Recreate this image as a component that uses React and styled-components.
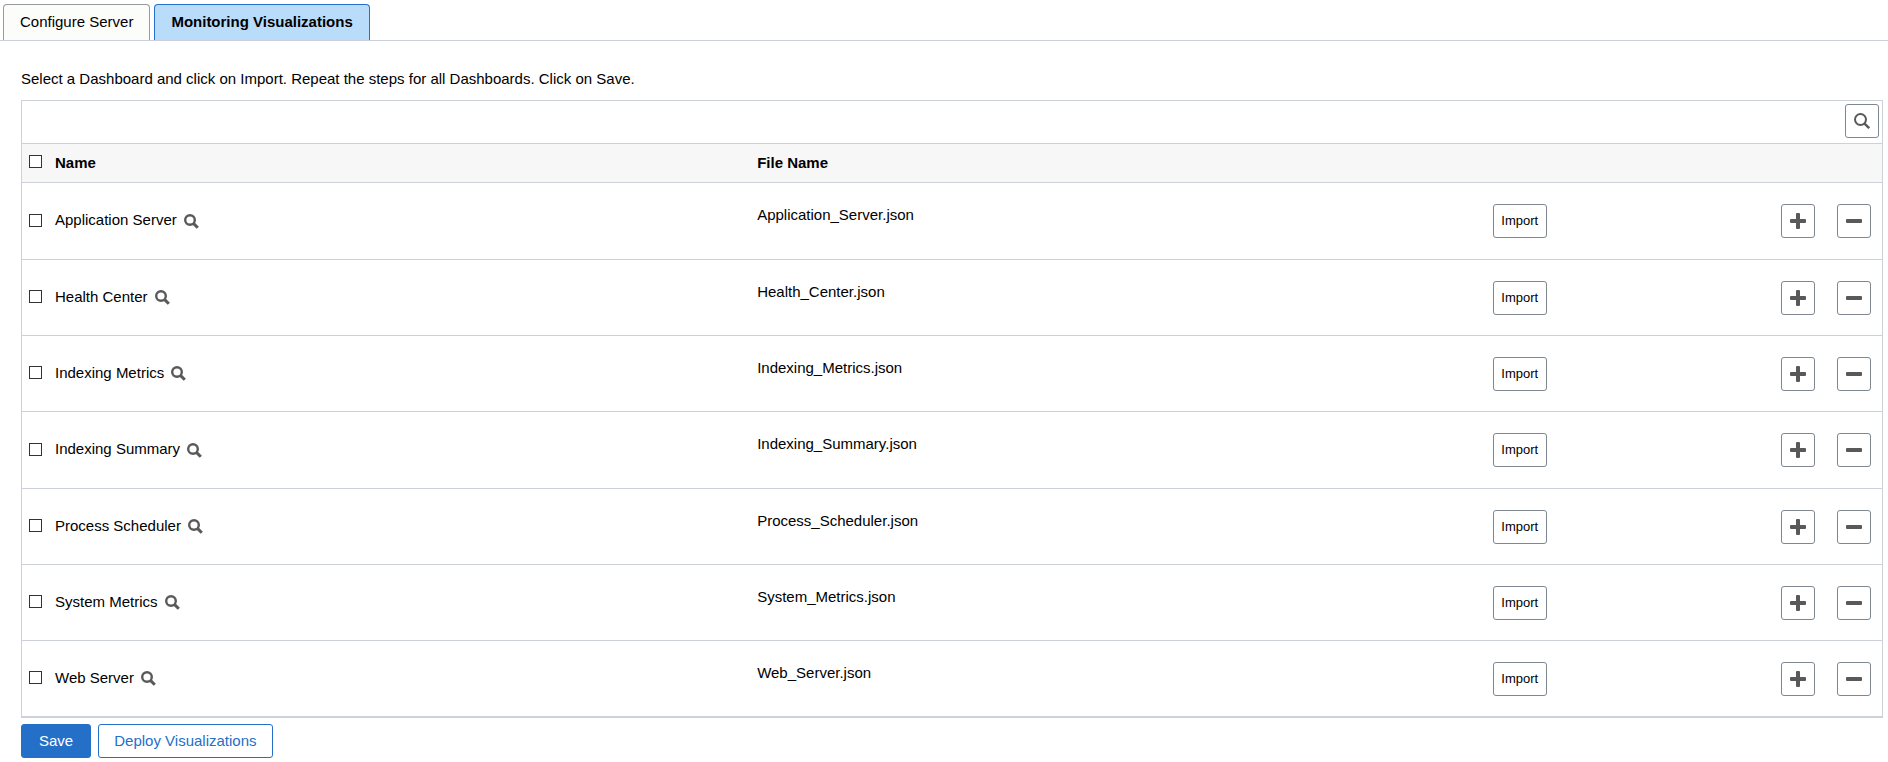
import React, { useState } from 'react';
import styled, { createGlobalStyle } from 'styled-components';

const colors = {
  line: '#cdd1d9',
  control: '#7f8790',
  icon: '#595959',
  primary: '#246fc8',
  tabFill: '#b9dcfb',
  header: '#f7f7f7',
};

const dashboards = [
  { name: 'Application Server', file: 'Application_Server.json' },
  { name: 'Health Center', file: 'Health_Center.json' },
  { name: 'Indexing Metrics', file: 'Indexing_Metrics.json' },
  { name: 'Indexing Summary', file: 'Indexing_Summary.json' },
  { name: 'Process Scheduler', file: 'Process_Scheduler.json' },
  { name: 'System Metrics', file: 'System_Metrics.json' },
  { name: 'Web Server', file: 'Web_Server.json' },
];

const GlobalStyle = createGlobalStyle`
  *, *::before, *::after {
    box-sizing: border-box;
  }

  body {
    margin: 0;
    background: #fff;
    color: #000;
    font-family: "Liberation Sans", Arial, sans-serif;
    font-size: 15px;
    line-height: 18px;
  }

  button, input {
    margin: 0;
    font: inherit;
  }
`;

const TabBar = styled.nav`
  display: flex;
  gap: 4px;
  padding: 4px 3px 0;
  border-bottom: 1px solid ${colors.line};
`;

const Tab = styled.button`
  height: 36px;
  padding: 0 16px 2px;
  border: 1px solid ${(props) => (props.$active ? colors.primary : '#969b9b')};
  border-bottom: 0;
  border-radius: 4px 4px 0 0;
  background: ${(props) => (props.$active ? colors.tabFill : '#fcfcfa')};
  color: #000;
  font-weight: ${(props) => (props.$active ? 'bold' : 'normal')};
  white-space: nowrap;
  cursor: pointer;
`;

const Content = styled.main`
  padding: 29px 5px 4px 21px;
`;

const Instructions = styled.p`
  margin: 0 0 12px;
`;

const Grid = styled.section`
  border: 1px solid ${colors.line};
  border-bottom-width: 2px;
`;

const GridToolbar = styled.div`
  display: flex;
  justify-content: flex-end;
  padding: 3px 3px 5px;
`;

const Table = styled.table`
  width: 100%;
  border-collapse: separate;
  border-spacing: 0;
  table-layout: fixed;
`;

const Col = styled.col`
  width: ${(props) => props.$width};
`;

const HeaderCell = styled.th`
  height: 40px;
  padding: 0 0 ${(props) => props.$lift || 0}px;
  border-top: 1px solid ${colors.line};
  border-bottom: 1px solid ${colors.line};
  background: ${colors.header};
  text-align: left;
`;

const Cell = styled.td`
  padding: 0 0 ${(props) => props.$lift || 0}px;
  border-bottom: 1px solid ${colors.line};
`;

const Row = styled.tr`
  height: 76px;

  &:nth-child(3n + 1) {
    height: 77px;
  }

  &:last-child {
    height: 75px;
  }

  &:last-child ${Cell} {
    border-bottom: 0;
  }
`;

const Checkbox = styled.input`
  display: block;
  width: 13px;
  height: 13px;
  margin-left: 7px;
  border: 1px solid #333;
  background: #fff;
  appearance: none;

  &:checked {
    background: ${colors.primary};
    box-shadow: inset 0 0 0 2px #fff;
  }
`;

const NameGroup = styled.div`
  display: flex;
  align-items: center;
  gap: 7px;
`;

const LookupButton = styled.button`
  display: flex;
  padding: 2px 0 0;
  border: 0;
  background: none;
  color: ${colors.icon};
  cursor: pointer;
`;

const IconButton = styled.button`
  display: flex;
  align-items: center;
  justify-content: center;
  width: 34px;
  height: 34px;
  padding: 0;
  border: 1px solid ${colors.control};
  border-radius: 3px;
  background: #fff;
  color: ${colors.icon};
  cursor: pointer;
`;

const ImportButton = styled.button`
  display: block;
  width: 54px;
  height: 34px;
  padding: 0;
  border: 1px solid ${colors.control};
  border-radius: 3px;
  background: #fff;
  color: #000;
  font-size: 13px;
  cursor: pointer;
`;

const Actions = styled.div`
  display: flex;
  gap: 7px;
  padding-top: 6px;
`;

const ActionButton = styled.button`
  height: 34px;
  padding: 0 ${(props) => (props.$primary ? 17 : 15)}px;
  border: 1px solid ${colors.primary};
  border-radius: 3px;
  background: ${(props) => (props.$primary ? colors.primary : '#fff')};
  color: ${(props) => (props.$primary ? '#fff' : colors.primary)};
  cursor: pointer;
`;

const SearchIcon = () => (
  <svg width="16" height="16" viewBox="0 0 16 16" fill="none" stroke="currentColor" aria-hidden="true">
    <circle cx="6.5" cy="6.5" r="5.5" strokeWidth="2" />
    <path d="M10.3 10.3L15.2 15.2" strokeWidth="2.4" />
  </svg>
);

const LookupIcon = () => (
  <svg width="15" height="15" viewBox="0 0 15 15" fill="none" stroke="currentColor" aria-hidden="true">
    <circle cx="6" cy="6" r="4.8" strokeWidth="2.4" />
    <path d="M9.4 9.4L13.8 13.8" strokeWidth="3" />
  </svg>
);

const PlusIcon = () => (
  <svg width="16" height="16" viewBox="0 0 16 16" fill="currentColor" aria-hidden="true">
    <rect x="0" y="6" width="16" height="4" rx="1" />
    <rect x="6" y="0" width="4" height="16" rx="1" />
  </svg>
);

const MinusIcon = () => (
  <svg width="16" height="16" viewBox="0 0 16 16" fill="currentColor" aria-hidden="true">
    <rect x="0" y="6" width="16" height="4" rx="1" />
  </svg>
);

const App = () => {
  const [activeTab, setActiveTab] = useState('Monitoring Visualizations');
  const [selected, setSelected] = useState([]);

  const toggle = (name) =>
    setSelected(selected.includes(name) ? selected.filter((item) => item !== name) : [...selected, name]);

  const toggleAll = (event) => setSelected(event.target.checked ? dashboards.map(({ name }) => name) : []);

  return (
    <>
      <GlobalStyle />
      <TabBar>
        {['Configure Server', 'Monitoring Visualizations'].map((label) => (
          <Tab key={label} type="button" $active={label === activeTab} onClick={() => setActiveTab(label)}>
            {label}
          </Tab>
        ))}
      </TabBar>
      <Content>
        <Instructions>
          Select a Dashboard and click on Import. Repeat the steps for all Dashboards. Click on Save.
        </Instructions>
        <Grid>
          <GridToolbar>
            <IconButton type="button" aria-label="Search">
              <SearchIcon />
            </IconButton>
          </GridToolbar>
          <Table>
            <colgroup>
              <Col $width="33px" />
              <Col $width="37.75%" />
              <Col $width="39.55%" />
              <Col />
              <Col $width="56px" />
              <Col $width="45px" />
            </colgroup>
            <thead>
              <tr>
                <HeaderCell $lift={3}>
                  <Checkbox
                    type="checkbox"
                    aria-label="Select all"
                    checked={selected.length === dashboards.length}
                    onChange={toggleAll}
                  />
                </HeaderCell>
                <HeaderCell scope="col">Name</HeaderCell>
                <HeaderCell scope="col">File Name</HeaderCell>
                <HeaderCell colSpan={3} />
              </tr>
            </thead>
            <tbody>
              {dashboards.map(({ name, file }, index) => (
                <Row key={name}>
                  <Cell $lift={2}>
                    <Checkbox
                      id={`dashboard-${index}`}
                      type="checkbox"
                      checked={selected.includes(name)}
                      onChange={() => toggle(name)}
                    />
                  </Cell>
                  <Cell $lift={2}>
                    <NameGroup>
                      <label htmlFor={`dashboard-${index}`}>{name}</label>
                      <LookupButton type="button" aria-label={`Look up ${name}`}>
                        <LookupIcon />
                      </LookupButton>
                    </NameGroup>
                  </Cell>
                  <Cell $lift={12}>{file}</Cell>
                  <Cell>
                    <ImportButton type="button">Import</ImportButton>
                  </Cell>
                  <Cell>
                    <IconButton type="button" aria-label="Add row">
                      <PlusIcon />
                    </IconButton>
                  </Cell>
                  <Cell>
                    <IconButton type="button" aria-label={`Delete ${name}`}>
                      <MinusIcon />
                    </IconButton>
                  </Cell>
                </Row>
              ))}
            </tbody>
          </Table>
        </Grid>
        <Actions>
          <ActionButton type="button" $primary>
            Save
          </ActionButton>
          <ActionButton type="button">Deploy Visualizations</ActionButton>
        </Actions>
      </Content>
    </>
  );
};

export default App;
